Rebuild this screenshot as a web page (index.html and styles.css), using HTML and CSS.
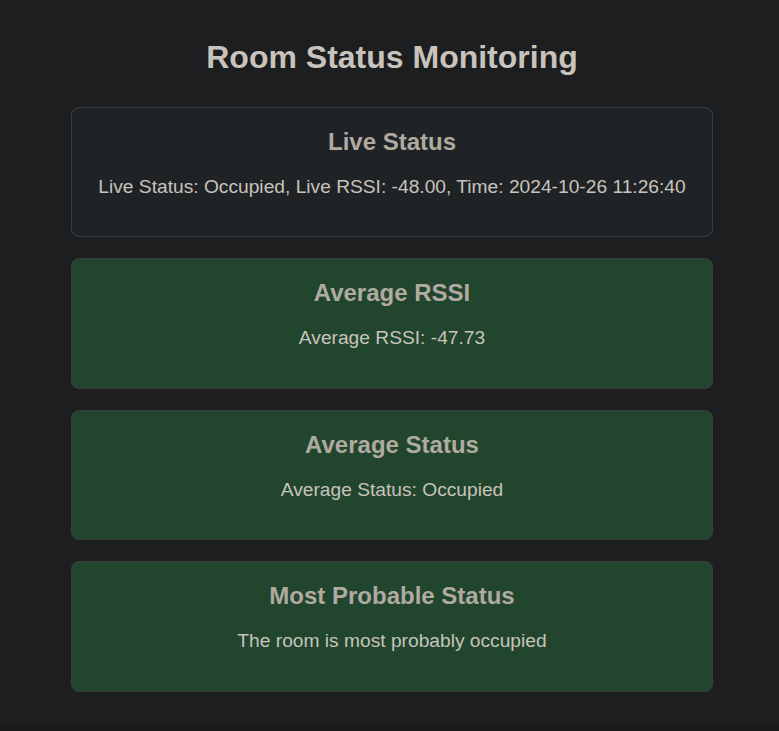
FILE: index.html
```html
<!DOCTYPE html>
<html lang="en">
<head>
<meta charset="utf-8">
<title>Room Status Monitoring</title>
<link rel="stylesheet" href="styles.css">
</head>
<body>
<h1 class="title">Room Status Monitoring</h1>
<div class="container">
  <section class="card card-live">
    <h2 class="card-title">Live Status</h2>
    <p class="card-text">Live Status: Occupied, Live RSSI: -48.00, Time: 2024-10-26 11:26:40</p>
  </section>
  <section class="card card-green">
    <h2 class="card-title">Average RSSI</h2>
    <p class="card-text">Average RSSI: -47.73</p>
  </section>
  <section class="card card-green">
    <h2 class="card-title">Average Status</h2>
    <p class="card-text">Average Status: Occupied</p>
  </section>
  <section class="card card-green">
    <h2 class="card-title">Most Probable Status</h2>
    <p class="card-text">The room is most probably occupied</p>
  </section>
</div>
</body>
</html>
```
FILE: styles.css
```css
html {
  background: #181a1b;
}
body {
  margin: 0;
  padding: 20px 0 10px 5px;
  background: #1c1e1f;
  font-family: "Liberation Sans", Arial, sans-serif;
  color: #c8c3bc;
}
.title {
  font-size: 32px;
  margin: 19px 0 31px;
  text-align: center;
  color: #c8c3bc;
}
.container {
  max-width: 642px;
  margin: 0 auto;
}
.card {
  border: 1px solid #3a3e41;
  border-radius: 8px;
  padding: 20px;
  margin-bottom: 21px;
  text-align: center;
  height: 88.4px;
}
.card-live {
  background: #202326;
}
.card-green {
  background: #21462d;
}
.card-title {
  margin: 0 0 20px;
  font-size: 24px;
  color: #b0aaa0;
}
.card-text {
  margin: 0;
  font-size: 19.2px;
  color: #c8c3bc;
}
```
